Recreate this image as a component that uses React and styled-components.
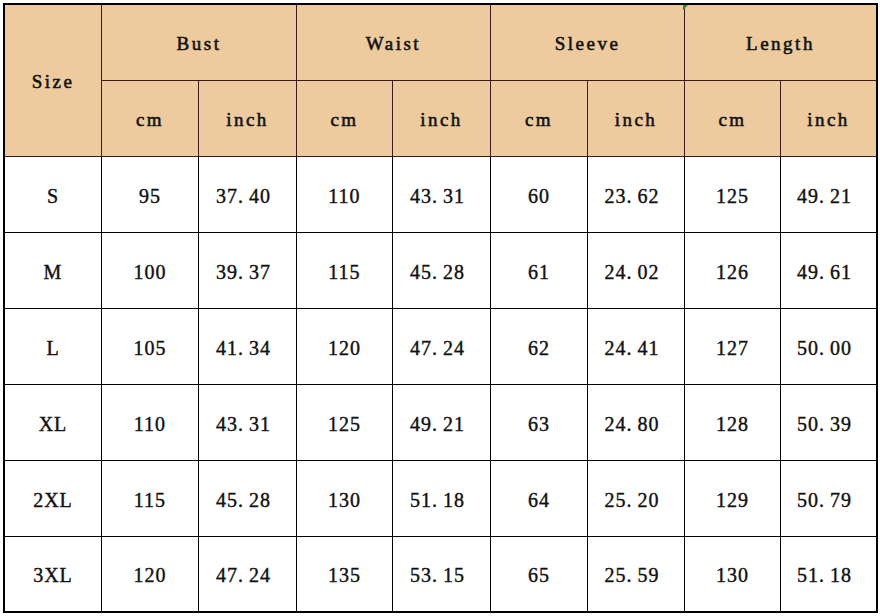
import React from "react";
import styled, { createGlobalStyle } from "styled-components";

const Global = createGlobalStyle`
  html, body {
    margin: 0;
    padding: 0;
    background: #ffffff;
  }
`;

const Frame = styled.div`
  position: relative;
  box-sizing: border-box;
  margin: 3px 0 0 3px;
  width: 875px;
  height: 610px;
  border: 2px solid #000;
  display: grid;
  grid-template-columns: 97px 97px 98px 96px 98px 97px 97px 96px 95px;
  grid-template-rows: repeat(7, 76px) 74px;
`;

const Cell = styled.div`
  box-sizing: border-box;
  display: flex;
  align-items: center;
  justify-content: center;
  padding-top: 3px;
  background: ${(p) => (p.$head ? "#edcb9e" : "#ffffff")};
  border-right: ${(p) => (p.$lastCol ? "none" : `1px solid ${p.$head ? "#3a1c1c" : "#000"}`)};
  border-bottom: ${(p) => (p.$lastRow ? "none" : `1px solid ${p.$head ? "#3a1c1c" : "#000"}`)};
  grid-column: ${(p) => p.$col || "auto"};
  grid-row: ${(p) => p.$row || "auto"};
  color: #111;
  font-family: "Liberation Serif", "DejaVu Serif", serif;
  font-size: ${(p) => (p.$head ? "19px" : "20px")};
  font-weight: 400;
  -webkit-text-stroke: ${(p) => (p.$head ? "0.55px #111" : "0.4px #111")};
  letter-spacing: ${(p) => (p.$head ? "2.5px" : "1px")};
`;

const Decimal = styled.span`
  margin-right: 8px;
`;

const Dot = styled.span`
  margin-right: 5px;
`;

const Marker = styled.div`
  position: absolute;
  left: 678px;
  top: 0;
  width: 0;
  height: 0;
  border-top: 5px solid #2e8b2e;
  border-right: 5px solid transparent;
`;

const Num = ({ value }) => {
  const s = String(value);
  const i = s.indexOf(".");
  if (i < 0) return s;
  return (
    <Decimal>
      {s.slice(0, i)}
      <Dot>.</Dot>
      {s.slice(i + 1)}
    </Decimal>
  );
};

const groups = ["Bust", "Waist", "Sleeve", "Length"];

const rows = [
  ["S", 95, "37.40", 110, "43.31", 60, "23.62", 125, "49.21"],
  ["M", 100, "39.37", 115, "45.28", 61, "24.02", 126, "49.61"],
  ["L", 105, "41.34", 120, "47.24", 62, "24.41", 127, "50.00"],
  ["XL", 110, "43.31", 125, "49.21", 63, "24.80", 128, "50.39"],
  ["2XL", 115, "45.28", 130, "51.18", 64, "25.20", 129, "50.79"],
  ["3XL", 120, "47.24", 135, "53.15", 65, "25.59", 130, "51.18"],
];

export default function App() {
  return (
    <>
      <Global />
      <Frame>
        <Cell $head $row="1 / span 2" $col="1">Size</Cell>
        {groups.map((g, i) => (
          <Cell key={g} $head $row="1" $col={`${2 + i * 2} / span 2`} $lastCol={i === groups.length - 1}>
            {g}
          </Cell>
        ))}
        {groups.map((g, i) => (
          <React.Fragment key={g + "-units"}>
            <Cell $head $row="2" $col={2 + i * 2}>cm</Cell>
            <Cell $head $row="2" $col={3 + i * 2} $lastCol={i === groups.length - 1}>inch</Cell>
          </React.Fragment>
        ))}
        {rows.map((r, ri) =>
          r.map((v, ci) => (
            <Cell key={`${ri}-${ci}`} $lastCol={ci === r.length - 1} $lastRow={ri === rows.length - 1}>
              <Num value={v} />
            </Cell>
          ))
        )}
        <Marker />
      </Frame>
    </>
  );
}
